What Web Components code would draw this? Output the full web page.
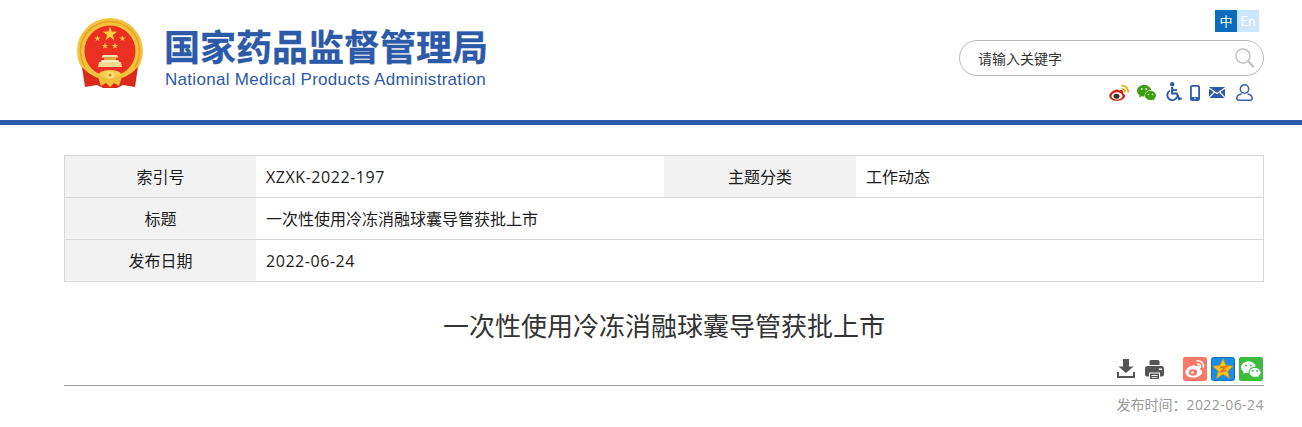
<!DOCTYPE html>
<html lang="zh">
<head>
<meta charset="utf-8">
<title>一次性使用冷冻消融球囊导管获批上市</title>
<style>
  html, body { margin: 0; padding: 0; background: #fff; }
  body { font-family: "Noto Sans CJK SC", "Liberation Sans", sans-serif; overflow: hidden; }
</style>
</head>
<body>
<site-header></site-header>
<page-main>
  <info-table>
    <info-row>
      <info-cell label="索引号" latin>XZXK-2022-197</info-cell>
      <info-cell label="主题分类" style="--label-width:192px">工作动态</info-cell>
    </info-row>
    <info-row>
      <info-cell label="标题">一次性使用冷冻消融球囊导管获批上市</info-cell>
    </info-row>
    <info-row>
      <info-cell label="发布日期" latin>2022-06-24</info-cell>
    </info-row>
  </info-table>
  <article-head date="2022-06-24">一次性使用冷冻消融球囊导管获批上市</article-head>
</page-main>

<script>
const headerTemplate = document.createElement("template");
headerTemplate.innerHTML = `
  <style>
    :host { display: block; }
    .top {
      height: 120px;
      margin-left: 64px;
      width: 1200px;
      display: flex;
      justify-content: space-between;
    }
    .brand { display: flex; padding: 18px 0 0 13px; }
    .emblem { width: 66px; height: 70px; display: block; }
    .names { margin: 5px 0 0 22px; width: 321px; }
    .cn {
      font-size: 36px;
      line-height: 44px;
      font-weight: 700;
      margin-left: -1px;
      color: #2c5aa8;
      -webkit-text-stroke: 0.3px #2c5aa8;
      white-space: nowrap;
    }
    .en {
      font-family: "Liberation Sans", sans-serif;
      font-size: 17px;
      line-height: 20px;
      letter-spacing: 0.3px;
      margin-top: 3px;
      color: #2c5aa8;
      white-space: nowrap;
    }
    .tools { width: 305px; display: flex; flex-direction: column; align-items: flex-end; }
    .lang { display: flex; margin: 10px 5px 8px 0; }
    .lang span {
      width: 22px; height: 22px;
      line-height: 22px;
      text-align: center;
      font-size: 13px;
      color: #fff;
    }
    .lang .on { background: #0a6bbf; }
    .lang .off { background: #cce6ff; }
    .search {
      box-sizing: border-box;
      width: 305px; height: 36px;
      border: 1px solid #b9b9b9;
      border-radius: 18px;
      display: flex;
      align-items: center;
      justify-content: space-between;
      padding: 0 9px 0 18px;
      font-size: 14px;
      color: #333;
    }
    .search span { margin-top: -1px; }
    .search svg { width: 19px; height: 20px; display: block; }
    .links { display: flex; align-items: center; height: 19px; margin: 7px 11px 0 0; }
    .links svg { display: block; }
  </style>
  <div class="top">
    <div class="brand">
      <svg class="emblem" viewBox="0 0 66 70">
        <defs>
          <polygon id="star" points="0,-1 .235,-.324 .951,-.309 .38,.124 .588,.809 0,.4 -.588,.809 -.38,.124 -.951,-.309 -.235,-.324" fill="#fbd23c"/>
        </defs>
        <circle cx="33" cy="33" r="33" fill="#f4c23e"/>
        <circle cx="33" cy="33" r="29.5" fill="none" stroke="#e2a322" stroke-width="1.5"/>
        <circle cx="33" cy="33" r="25.5" fill="#ec2f23"/>
        <use href="#star" transform="translate(33 16) scale(7.5)"/>
        <use href="#star" transform="translate(20.5 20.5) scale(3.2)"/>
        <use href="#star" transform="translate(45.5 20.5) scale(3.2)"/>
        <use href="#star" transform="translate(28 28) scale(3.2)"/>
        <use href="#star" transform="translate(38 28) scale(3.2)"/>
        <path d="M26 37h14l1.5 2.5h-17z" fill="#f9e3b0"/>
        <path d="M27 39.5h12V42H27z" fill="#e2a33a"/>
        <path d="M25 42h16l1.5 2h-19z" fill="#fbe9c0"/>
        <path d="M22 44h22l1 5H21z" fill="#f8d98f"/>
        <path d="M5 49 Q14 60 33 61 Q52 60 61 49 L58 69 L46 67 L40 70 H26 L20 67 L8 69 Z" fill="#d92a1c"/>
        <path d="M9 47 Q17 57 33 58 Q49 57 57 47 L59 50 Q51 61 33 62 Q15 61 7 50 Z" fill="#f4c23e"/>
        <path d="M21 59 Q33 53 45 59 L42 68 L37 65 L33 69 L29 65 L24 68 Z" fill="#f2bd3a"/>
        <ellipse cx="33" cy="56" rx="11" ry="4" fill="#f6ca4a"/>
        <ellipse cx="33" cy="57" rx="4.5" ry="3.5" fill="#f9dc7a"/>
        <circle cx="33" cy="57" r="1.5" fill="#d88f1b"/>
      </svg>
      <div class="names">
        <div class="cn">国家药品监督管理局</div>
        <div class="en">National Medical Products Administration</div>
      </div>
    </div>
    <div class="tools">
      <div class="lang"><span class="on">中</span><span class="off">En</span></div>
      <div class="search">
        <span>请输入关键字</span>
        <svg viewBox="0 0 19 20" fill="none" stroke="#bdbdbd">
          <circle cx="8" cy="8" r="7" stroke-width="1.3"/>
          <path d="M13 13l5.5 6" stroke-width="2"/>
        </svg>
      </div>
      <div class="links">
        <svg width="20" height="16" viewBox="0 0 20 16" style="margin-right:8px">
          <path d="M7.5 4.5C3.5 5.5 0 8.500 .3 11.300c.5 3 4.300 4.900 8.700 4.500 4.500-.5 7.500-3 7-5.300-.3-1.500-2-2-2-2s.8-2-.5-3c-1.300-1-3.500 0-3.500 0S9.300 4 7.500 4.500z" fill="#d81e06"/>
          <ellipse cx="8" cy="11" rx="5.5" ry="3.7" fill="#fff"/>
          <ellipse cx="7.500" cy="11.300" rx="3" ry="2.5" fill="#333"/>
          <path d="M13 .9c3.700-.4 6.600 2.500 6.100 6.100M13.300 4c1.800-.2 3 1.200 2.700 3" fill="none" stroke="#eda200" stroke-width="1.500" stroke-linecap="round"/>
        </svg>
        <svg width="20" height="16" viewBox="0 0 20 16" style="margin-right:9px">
          <path d="M7 0C3 0 0 2.600 0 5.800c0 1.800 1 3.400 2.500 4.500L2 12.500l2.500-1.300c.8.300 1.600.4 2.500.4 0 0 .6.100 .6 0C7.300 8 9.800 5 14 5c0 0 .2 0 .2-.2C13.400 2.100 10.500 0 7 0z" fill="#3aa012"/>
          <path d="M13.500 6C10.400 6 8 8 8 10.600s2.400 4.500 5.500 4.500c.7 0 1.300-.1 1.900-.3l2 1-.5-1.800c1.300-.9 2.100-2.100 2.100-3.500C19 8 16.600 6 13.500 6z" fill="#3aa012"/>
          <circle cx="4.800" cy="4" r=".9" fill="#fff"/><circle cx="9.200" cy="4" r=".9" fill="#fff"/>
          <circle cx="11.500" cy="9.500" r=".8" fill="#fff"/><circle cx="15.500" cy="9.500" r=".8" fill="#fff"/>
        </svg>
        <svg width="16" height="19" viewBox="0 0 16 19" fill="none" stroke="#2c5aa8" style="margin:-2px 8px 0 0">
          <circle cx="6.200" cy="2.200" r="2.200" fill="#2c5aa8" stroke="none"/>
          <path d="M6.200 5V11.500H10.800L13.200 17.200 15.700 16.200" stroke-width="2.200"/>
          <path d="M6.200 8H11" stroke-width="1.800"/>
          <path d="M3.800 8.800a5 5 0 1 0 7.300 5.800" stroke-width="1.900"/>
        </svg>
        <svg width="10" height="16" viewBox="0 0 10 16" style="margin-right:9px">
          <rect x=".9" y=".9" width="8.200" height="14.200" rx="1.600" fill="none" stroke="#2c5aa8" stroke-width="1.800"/>
          <rect x="1" y="12" width="8" height="3" fill="#2c5aa8"/>
          <circle cx="5" cy="13.500" r=".8" fill="#fff"/>
        </svg>
        <svg width="16" height="11" viewBox="0 0 16 11" style="margin-right:11px">
          <rect width="16" height="11" rx="1" fill="#2c5aa8"/>
          <path d="M0 1L8 6.500 16 1M0 10.500L5.500 5M16 10.500L10.500 5" fill="none" stroke="#fff" stroke-width="1.200"/>
        </svg>
        <svg width="17" height="17" viewBox="0 0 17 17" fill="none" stroke="#3b5fae" stroke-width="1.500">
          <circle cx="8.500" cy="5" r="4.200"/>
          <path d="M5.500 9.800C3 10.500 .8 12.500 .8 14.300c0 1.300 1 1.900 2.200 1.900h11c1.200 0 2.200-.6 2.200-1.900 0-1.800-2.200-3.800-4.700-4.500"/>
        </svg>
      </div>
    </div>
  </div>
  <div style="height:5px;background:#2c5aa8"></div>
`;

class SiteHeader extends HTMLElement {
  constructor() {
    super();
    this.attachShadow({ mode: "open" }).appendChild(headerTemplate.content.cloneNode(true));
  }
}
customElements.define("site-header", SiteHeader);

class PageMain extends HTMLElement {
  constructor() {
    super();
    this.attachShadow({ mode: "open" }).innerHTML = `
      <style>
        :host { display: block; width: 1200px; margin-left: 64px; padding-top: 30px; }
      </style>
      <slot></slot>
    `;
  }
}
customElements.define("page-main", PageMain);

class InfoTable extends HTMLElement {
  constructor() {
    super();
    this.attachShadow({ mode: "open" }).innerHTML = `
      <style>
        :host { display: block; border: 1px solid #d8d8d8; border-bottom: 0; }
      </style>
      <slot></slot>
    `;
  }
}
customElements.define("info-table", InfoTable);

class InfoRow extends HTMLElement {
  constructor() {
    super();
    this.attachShadow({ mode: "open" }).innerHTML = `
      <style>
        :host { display: flex; height: 41px; border-bottom: 1px solid #d8d8d8; }
      </style>
      <slot></slot>
    `;
  }
}
customElements.define("info-row", InfoRow);

class InfoCell extends HTMLElement {
  constructor() {
    super();
    this.attachShadow({ mode: "open" }).innerHTML = `
      <style>
        :host { display: flex; flex: 1 1 0; min-width: 0; font-size: 16px; color: #1c1c1c; }
        :host([latin]) .value { font-family: "Open Sans", "Noto Sans CJK SC", sans-serif; letter-spacing: 0.55px; padding-bottom: 0; }
        .label { flex: 0 0 var(--label-width, 191px); background: #f2f2f2; display: flex; align-items: center; justify-content: center; padding-bottom: 2px; box-sizing: border-box; }
        .value { flex: 1; padding: 0 0 2px 10px; display: flex; align-items: center; white-space: nowrap; }
      </style>
      <div class="label"></div>
      <div class="value"><slot></slot></div>
    `;
    this.shadowRoot.querySelector(".label").textContent = this.getAttribute("label");
  }
}
customElements.define("info-cell", InfoCell);

class ArticleHead extends HTMLElement {
  constructor() {
    super();
    this.attachShadow({ mode: "open" }).innerHTML = `
      <style>
        :host { display: block; }
        h1 { margin: 0; padding-top: 24px; text-align: center; font-size: 26px; line-height: 38px; font-weight: 400; color: #333; }
        .bar { display: flex; justify-content: flex-end; align-items: center; height: 24px; margin-top: 13px; padding: 0 1px 4px 0; border-bottom: 1px solid #999; }
        .bar svg { display: block; }
        .date { text-align: right; font-size: 14px; line-height: 20px; color: #999; margin-top: 8px; }
        .date b { font-family: "Open Sans", "Noto Sans CJK SC", sans-serif; font-weight: 400; letter-spacing: 0.45px; }
      </style>
      <h1><slot></slot></h1>
      <div class="bar">
        <svg width="18" height="19" viewBox="0 0 18 19" fill="#555" style="margin:0 10px 2px 0">
          <path d="M6 0h6v7.5h4.500L9 14 1.500 7.500H6z"/>
          <path d="M0 13h2v4h14v-4h2v6H0z"/>
        </svg>
        <svg width="19" height="19" viewBox="0 0 19 19" style="margin-right:19px">
          <path d="M4.500 1.500a1.500 1.500 0 0 1 1.500-1.500h7a1.500 1.500 0 0 1 1.500 1.500v3.500h-10z" fill="#555"/>
          <path d="M2.500 6h14a2.500 2.500 0 0 1 2.500 2.500v6a2 2 0 0 1-2 2h-2v-4h-11v4H2a2 2 0 0 1-2-2v-6a2.500 2.500 0 0 1 2.500-2.500z" fill="#555"/>
          <path d="M5 13.500h9v5.500H5z" fill="#555"/>
          <path d="M6.500 15h6v1h-6zM6.500 17h6v.8h-6zM14 8.500h3v1.500h-3z" fill="#fff"/>
        </svg>
        <svg width="24" height="24" viewBox="0 0 24 24" style="margin-right:4px">
          <rect width="24" height="24" rx="2" fill="#f77a68"/>
          <path d="M9.500 8.500C5.500 9.500 2 12.500 2.500 16c.6 3.300 4.800 5 9.200 4.500 4.800-.5 8-3.300 7.500-6-.3-1.400-2.200-2-2.200-2s.8-2.100-.5-3.200c-1.400-1.100-3.800 0-3.800 0s.3-1.400-3.200-.8z" fill="#fff"/>
          <ellipse cx="10" cy="15.500" rx="4.200" ry="3.200" fill="#f77a68"/>
          <circle cx="9.500" cy="15.500" r="1.300" fill="#fff"/>
          <path d="M14 3.800c3.800-.6 7 2.700 6.500 6.500M14.500 7c2-.2 3.300 1.300 3 3.300" fill="none" stroke="#fff" stroke-width="1.500" stroke-linecap="round"/>
        </svg>
        <svg width="24" height="24" viewBox="0 0 24 24" style="margin-right:4px">
          <rect x=".5" y=".5" width="23" height="23" rx="2" fill="#1c8de6" stroke="#0f6fc2"/>
          <path d="M12 2l2.900 6.600 7.100.7-5.400 4.700 1.700 7.100L12 17l-6.300 4.100L7.400 14 2 9.300l7.100-.7z" fill="#ffc820" stroke="#e39a00" stroke-width="1" stroke-linejoin="round"/>
          <path d="M9 10.500l6-1-5 5 5.500-1" fill="none" stroke="#e8771a" stroke-width="1.800"/>
        </svg>
        <svg width="24" height="24" viewBox="0 0 24 24">
          <rect width="24" height="24" rx="2" fill="#3dbc3d"/>
          <path d="M9.500 4.500C5.400 4.500 2 7.100 2 10.300c0 1.900 1.100 3.500 2.800 4.600L4 17l2.800-1.300c.8.200 1.700.4 2.700.4-.3-3.500 2.700-6.500 7.300-6.500-.6-3-3.700-5.100-7.300-5.100z" fill="#fff"/>
          <path d="M16 11c-3 0-5.500 2-5.500 4.400s2.500 4.400 5.500 4.400c.7 0 1.300-.1 1.900-.3l2.100 1.100-.6-1.900c1.300-.8 2.100-2 2.100-3.300C21.500 13 19 11 16 11z" fill="#fff"/>
          <circle cx="7" cy="8.500" r="1" fill="#3dbc3d"/><circle cx="12" cy="8.500" r="1" fill="#3dbc3d"/>
          <circle cx="14" cy="14" r=".9" fill="#3dbc3d"/><circle cx="18" cy="14" r=".9" fill="#3dbc3d"/>
        </svg>
      </div>
      <div class="date">发布时间：<b></b></div>
    `;
    this.shadowRoot.querySelector(".date b").textContent = this.getAttribute("date");
  }
}
customElements.define("article-head", ArticleHead);
</script>
</body>
</html>
